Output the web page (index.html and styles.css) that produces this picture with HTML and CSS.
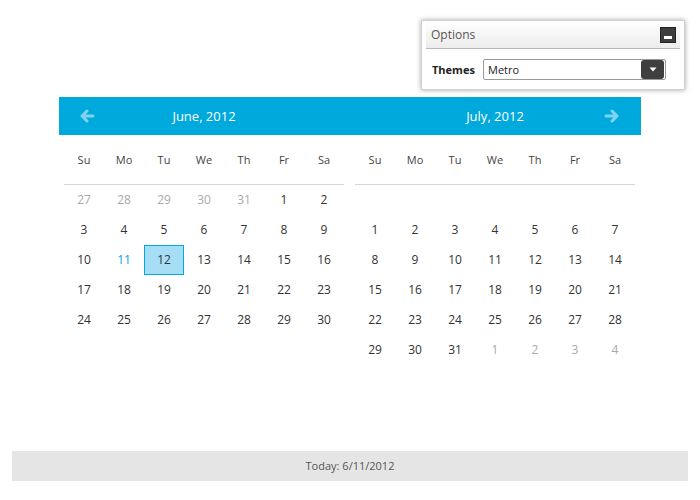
FILE: index.html
```html
<!DOCTYPE html>
<html>
<head>
<meta charset="utf-8">
<link rel="stylesheet" href="styles.css">
</head>
<body>
<div class="page">
  <div class="calendar">
    <div class="month">
      <div class="month-head">
        <span class="nav"><svg width="16" height="14" viewBox="0 0 16 14"><path d="M14 7H3M8 2L3 7l5 5" fill="none" stroke="#80d3ef" stroke-width="3" stroke-linecap="round" stroke-linejoin="round"/></svg></span>
        <span class="title">June, 2012</span>
        <span class="nav"></span>
      </div>
      <div class="grid">
        <div class="wd">Su</div><div class="wd">Mo</div><div class="wd">Tu</div><div class="wd">We</div><div class="wd">Th</div><div class="wd">Fr</div><div class="wd">Sa</div>
        <div class="d other">27</div><div class="d other">28</div><div class="d other">29</div><div class="d other">30</div><div class="d other">31</div><div class="d">1</div><div class="d">2</div>
        <div class="d">3</div><div class="d">4</div><div class="d">5</div><div class="d">6</div><div class="d">7</div><div class="d">8</div><div class="d">9</div>
        <div class="d">10</div><div class="d today">11</div><div class="d selected">12</div><div class="d">13</div><div class="d">14</div><div class="d">15</div><div class="d">16</div>
        <div class="d">17</div><div class="d">18</div><div class="d">19</div><div class="d">20</div><div class="d">21</div><div class="d">22</div><div class="d">23</div>
        <div class="d">24</div><div class="d">25</div><div class="d">26</div><div class="d">27</div><div class="d">28</div><div class="d">29</div><div class="d">30</div>
      </div>
    </div>
    <div class="month">
      <div class="month-head">
        <span class="nav"></span>
        <span class="title">July, 2012</span>
        <span class="nav"><svg width="16" height="14" viewBox="0 0 16 14"><path d="M2 7h11M8 2l5 5-5 5" fill="none" stroke="#80d3ef" stroke-width="3" stroke-linecap="round" stroke-linejoin="round"/></svg></span>
      </div>
      <div class="grid">
        <div class="wd">Su</div><div class="wd">Mo</div><div class="wd">Tu</div><div class="wd">We</div><div class="wd">Th</div><div class="wd">Fr</div><div class="wd">Sa</div>
        <div class="d empty"></div><div class="d empty"></div><div class="d empty"></div><div class="d empty"></div><div class="d empty"></div><div class="d empty"></div><div class="d empty"></div>
        <div class="d">1</div><div class="d">2</div><div class="d">3</div><div class="d">4</div><div class="d">5</div><div class="d">6</div><div class="d">7</div>
        <div class="d">8</div><div class="d">9</div><div class="d">10</div><div class="d">11</div><div class="d">12</div><div class="d">13</div><div class="d">14</div>
        <div class="d">15</div><div class="d">16</div><div class="d">17</div><div class="d">18</div><div class="d">19</div><div class="d">20</div><div class="d">21</div>
        <div class="d">22</div><div class="d">23</div><div class="d">24</div><div class="d">25</div><div class="d">26</div><div class="d">27</div><div class="d">28</div>
        <div class="d">29</div><div class="d">30</div><div class="d">31</div><div class="d other">1</div><div class="d other">2</div><div class="d other">3</div><div class="d other">4</div>
      </div>
    </div>
  </div>
  <div class="footer">Today: 6/11/2012</div>

  <div class="options">
    <div class="options-head">
      <span>Options</span>
      <span class="min-btn"><span class="min-bar"></span></span>
    </div>
    <div class="options-body">
      <span class="label">Themes</span>
      <div class="select">
        <span class="select-text">Metro</span>
        <span class="select-btn"><svg width="8" height="5" viewBox="0 0 8 5"><path d="M0.5 0.5h7L4 4.5z" fill="#fff"/></svg></span>
      </div>
    </div>
  </div>
</div>
</body>
</html>
```
FILE: styles.css
```css
html, body {
  margin: 0;
  padding: 0;
  background: #fff;
}
.page {
  position: relative;
  width: 700px;
  height: 500px;
  display: flex;
  flex-direction: column;
  box-sizing: border-box;
  padding-top: 97px;
  font-family: "Open Sans", "Noto Sans", sans-serif;
  font-size: 12px;
  color: #333;
}
.calendar {
  margin-left: 59px;
  width: 582px;
  display: flex;
  gap: 11px;
  padding: 0 6px 0 5px;
  box-sizing: border-box;
  background: linear-gradient(#00a9dc, #00a9dc) no-repeat 0 0 / 100% 38px;
}
.month {
  width: 280px;
}
.month-head {
  height: 38px;
  display: grid;
  grid-template-columns: 46px 1fr 46px;
  align-items: center;
  color: #fff;
}
.nav {
  display: flex;
  justify-content: center;
  align-items: center;
}
.title {
  text-align: center;
  font-size: 13px;
}
.grid {
  display: grid;
  grid-template-columns: repeat(7, 40px);
  grid-template-rows: 50px;
  grid-auto-rows: 30px;
}
.wd {
  line-height: 49px;
  text-align: center;
  font-size: 11px;
  color: #444;
  border-bottom: 1px solid #d4d4d4;
}
.d {
  text-align: center;
  line-height: 30px;
  font-size: 12px;
  color: #333;
  box-sizing: border-box;
}
.d.other {
  color: #aaa;
}
.d.today {
  color: #00a9dc;
}
.d.selected {
  background: #a6dff5;
  border: 1px solid #00a9dc;
  line-height: 28px;
}
.footer {
  margin: auto 12px 19px 12px;
  height: 30px;
  line-height: 30px;
  background: #e5e5e5;
  text-align: center;
  font-size: 11px;
  color: #555;
}
.options {
  position: absolute;
  left: 421px;
  top: 20px;
  width: 264px;
  height: 70px;
  box-sizing: border-box;
  background: #fff;
  border: 1px solid #cfcfcf;
  box-shadow: 0 0 5px rgba(0, 0, 0, 0.35);
  padding: 0 4px 0 4px;
}
.options-head {
  height: 27px;
  display: flex;
  align-items: center;
  justify-content: space-between;
  padding: 0 4px 0 5px;
  border-bottom: 1px solid #b8b8b8;
  background: linear-gradient(#fff, #ececec);
  color: #555;
  font-size: 12px;
}
.min-btn {
  width: 16px;
  height: 16px;
  background: #3d3d3d;
  border: 1px solid #222;
  box-sizing: border-box;
  display: flex;
  justify-content: center;
  align-items: flex-end;
  padding-bottom: 3px;
}
.min-bar {
  width: 8px;
  height: 3px;
  background: #fff;
}
.options-body {
  display: flex;
  align-items: center;
  padding: 10px 0 0 6px;
}
.label {
  font-weight: bold;
  font-size: 11px;
  color: #222;
  width: 51px;
}
.select {
  width: 183px;
  height: 21px;
  box-sizing: border-box;
  border: 1px solid #999;
  border-radius: 2px;
  display: flex;
  align-items: center;
  justify-content: space-between;
  padding-left: 4px;
}
.select-text {
  font-size: 11px;
  color: #222;
}
.select-btn {
  width: 23px;
  height: 19px;
  margin-right: 1px;
  background: #3f3f3f;
  border-radius: 3px;
  display: flex;
  align-items: center;
  justify-content: center;
}
```
